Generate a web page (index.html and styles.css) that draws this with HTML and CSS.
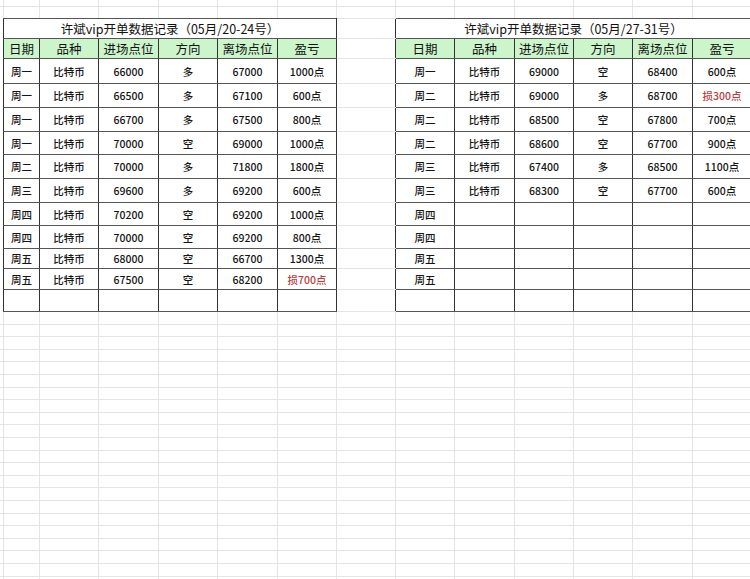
FILE: index.html
```html
<!DOCTYPE html>
<html lang="zh-CN">
<head>
<meta charset="utf-8">
<title>许斌vip开单数据记录</title>
<link rel="stylesheet" href="styles.css">
</head>
<body>
<div class="sheet">
  <div class="colrow sheet-top">
    <div></div><div></div><div></div><div></div><div></div><div></div><div></div><div></div><div></div><div></div><div></div><div></div><div></div><div></div>
  </div>
  <table class="log">
    <colgroup>
      <col class="w36"><col class="w59"><col class="w60"><col class="w59"><col class="w60"><col class="w59">
      <col class="w59">
      <col class="w59"><col class="w60"><col class="w59"><col class="w59"><col class="w60"><col class="w59">
    </colgroup>
    <tr class="title h17">
      <th colspan="6">许斌vip开单数据记录（05月/20-24号）</th>
      <td class="gap"></td>
      <th colspan="6">许斌vip开单数据记录（05月/27-31号）</th>
    </tr>
    <tr class="head h20">
      <th>日期</th><th>品种</th><th>进场点位</th><th>方向</th><th>离场点位</th><th>盈亏</th>
      <td class="gap"></td>
      <th>日期</th><th>品种</th><th>进场点位</th><th>方向</th><th>离场点位</th><th>盈亏</th>
    </tr>
    <tr class="h25">
      <td>周一</td><td>比特币</td><td>66000</td><td>多</td><td>67000</td><td>1000点</td>
      <td class="gap"></td>
      <td>周一</td><td>比特币</td><td>69000</td><td>空</td><td>68400</td><td>600点</td>
    </tr>
    <tr class="h24">
      <td>周一</td><td>比特币</td><td>66500</td><td>多</td><td>67100</td><td>600点</td>
      <td class="gap"></td>
      <td>周二</td><td>比特币</td><td>69000</td><td>多</td><td>68700</td><td class="loss">损300点</td>
    </tr>
    <tr class="h24">
      <td>周一</td><td>比特币</td><td>66700</td><td>多</td><td>67500</td><td>800点</td>
      <td class="gap"></td>
      <td>周二</td><td>比特币</td><td>68500</td><td>空</td><td>67800</td><td>700点</td>
    </tr>
    <tr class="h23">
      <td>周一</td><td>比特币</td><td>70000</td><td>空</td><td>69000</td><td>1000点</td>
      <td class="gap"></td>
      <td>周二</td><td>比特币</td><td>68600</td><td>空</td><td>67700</td><td>900点</td>
    </tr>
    <tr class="h24">
      <td>周二</td><td>比特币</td><td>70000</td><td>多</td><td>71800</td><td>1800点</td>
      <td class="gap"></td>
      <td>周三</td><td>比特币</td><td>67400</td><td>多</td><td>68500</td><td>1100点</td>
    </tr>
    <tr class="h24">
      <td>周三</td><td>比特币</td><td>69600</td><td>多</td><td>69200</td><td>600点</td>
      <td class="gap"></td>
      <td>周三</td><td>比特币</td><td>68300</td><td>空</td><td>67700</td><td>600点</td>
    </tr>
    <tr class="h23">
      <td>周四</td><td>比特币</td><td>70200</td><td>空</td><td>69200</td><td>1000点</td>
      <td class="gap"></td>
      <td>周四</td><td></td><td></td><td></td><td></td><td></td>
    </tr>
    <tr class="h23">
      <td>周四</td><td>比特币</td><td>70000</td><td>空</td><td>69200</td><td>800点</td>
      <td class="gap"></td>
      <td>周四</td><td></td><td></td><td></td><td></td><td></td>
    </tr>
    <tr class="h20">
      <td>周五</td><td>比特币</td><td>68000</td><td>空</td><td>66700</td><td>1300点</td>
      <td class="gap"></td>
      <td>周五</td><td></td><td></td><td></td><td></td><td></td>
    </tr>
    <tr class="h21">
      <td>周五</td><td>比特币</td><td>67500</td><td>空</td><td>68200</td><td class="loss">损700点</td>
      <td class="gap"></td>
      <td>周五</td><td></td><td></td><td></td><td></td><td></td>
    </tr>
    <tr class="h22">
      <td></td><td></td><td></td><td></td><td></td><td></td>
      <td class="gap"></td>
      <td></td><td></td><td></td><td></td><td></td><td></td>
    </tr>
  </table>
  <div class="colrow sheet-bottom">
    <div></div><div></div><div></div><div></div><div></div><div></div><div></div><div></div><div></div><div></div><div></div><div></div><div></div><div></div>
  </div>
</div>
</body>
</html>
```
FILE: styles.css
```css
* { box-sizing: border-box; }
html, body { margin: 0; padding: 0; background: #fff; overflow: hidden; }
body {
  font-family: "Noto Sans CJK SC", "Noto Sans", sans-serif;
  color: #151515;
}
.sheet {
  width: 750px;
  height: 579px;
  overflow: hidden;
  display: flex;
  flex-direction: column;
}
.colrow {
  display: grid;
  grid-template-columns: 3px 36px 59px 60px 59px 60px 59px 59px 59px 60px 59px 59px 60px 59px;
  width: 751px;
  flex: none;
}
.colrow > div + div { border-left: 1px solid #e4e4e4; }
.sheet-top {
  height: 18px;
  background: linear-gradient(#e4e4e4, #e4e4e4) 0 6px / 100% 1px no-repeat;
}
.sheet-bottom {
  flex: 1 0 auto;
  background: repeating-linear-gradient(to bottom, transparent 0 11.6px, #e4e4e4 11.6px 12.6px);
}
.log {
  margin-left: 3px;
  width: 748px;
  flex: none;
  border-collapse: collapse;
  table-layout: fixed;
}
.w36 { width: 36px; }
.w59 { width: 59px; }
.w60 { width: 60px; }
.log td, .log th {
  padding: 0;
  text-align: center;
  white-space: nowrap;
  overflow: hidden;
  font-size: 10.5px;
  font-weight: 500;
  border-left: 1px solid #333;
  border-right: 1px solid #333;
  border-top: 1px solid #555;
  border-bottom: 1px solid #555;
}
.log .gap {
  border-left: none;
  border-right: none;
  border-top-color: #e4e4e4;
  border-bottom-color: #e4e4e4;
}
.title th { font-size: 12.5px; font-weight: 400; color: #111; }
.head th { font-size: 12.5px; font-weight: 400; background: #ccf5cc; color: #111; }
.loss { color: #b8403c; }
.h17 { height: 17px; }
.h20 { height: 20px; }
.h21 { height: 21px; }
.h22 { height: 22px; }
.h23 { height: 23px; }
.h24 { height: 24px; }
.h25 { height: 25px; }
```
